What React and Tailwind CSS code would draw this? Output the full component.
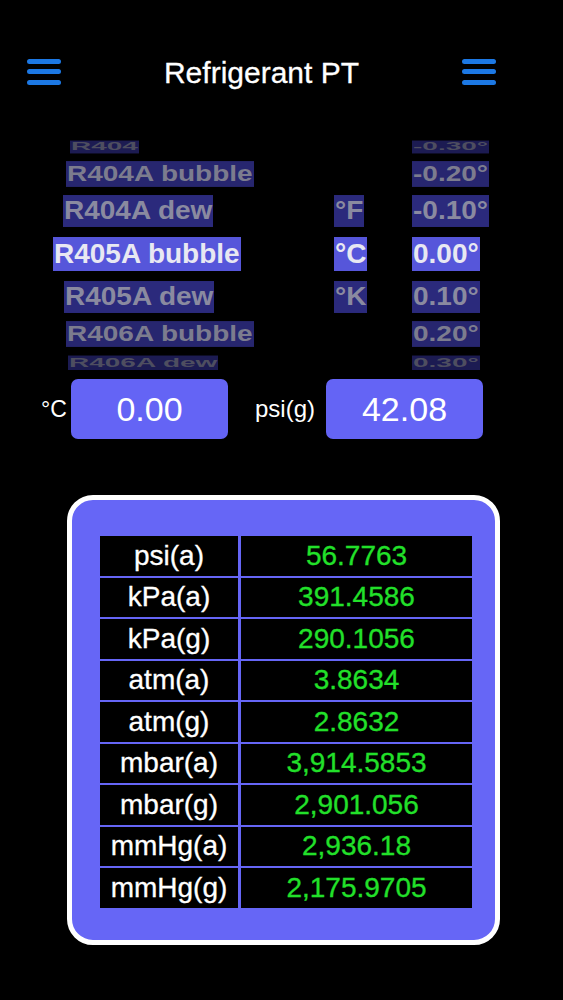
const PICKER_ROWS = [
  { label: "R404", unit: "", value: "-0.30°", h: 13, sy: "scale-y-[0.38]", lx: "pl-[70px]", tone: "far" },
  { label: "R404A bubble", unit: "", value: "-0.20°", h: 42, sy: "scale-y-[0.76]", lx: "pl-[66px]", tone: "mid" },
  { label: "R404A dew", unit: "°F", value: "-0.10°", h: 32, sy: "scale-y-[0.94]", lx: "pl-[63px]", tone: "near" },
  { label: "R405A bubble", unit: "°C", value: "0.00°", h: 54, sy: "scale-y-100", lx: "pl-[53px]", tone: "sel" },
  { label: "R405A dew", unit: "°K", value: "0.10°", h: 32, sy: "scale-y-[0.94]", lx: "pl-[64px]", tone: "near" },
  { label: "R406A bubble", unit: "", value: "0.20°", h: 42, sy: "scale-y-[0.76]", lx: "pl-[66px]", tone: "mid" },
  { label: "R406A dew", unit: "", value: "0.30°", h: 15, sy: "scale-y-[0.44]", lx: "pl-[68px]", tone: "far" },
];

const TONES = {
  sel: "bg-[#5656da] text-[#e8e8f2]",
  near: "bg-[#2b2a7c] text-[#8a8aa0]",
  mid: "bg-[#27266f] text-[#7c7c8e]",
  far: "bg-[#1c1b52] text-[#4e4e60]",
};

const RESULTS = [
  ["psi(a)", "56.7763"],
  ["kPa(a)", "391.4586"],
  ["kPa(g)", "290.1056"],
  ["atm(a)", "3.8634"],
  ["atm(g)", "2.8632"],
  ["mbar(a)", "3,914.5853"],
  ["mbar(g)", "2,901.056"],
  ["mmHg(a)", "2,936.18"],
  ["mmHg(g)", "2,175.9705"],
];

function MenuIcon() {
  return (
    <svg width="34" height="26" viewBox="0 0 34 26" fill="none">
      <g stroke="#1c78e4" strokeWidth="5" strokeLinecap="round">
        <line x1="2.5" y1="2.5" x2="31.5" y2="2.5" />
        <line x1="2.5" y1="12.5" x2="31.5" y2="12.5" />
        <line x1="2.5" y1="23.5" x2="31.5" y2="23.5" />
      </g>
    </svg>
  );
}

function Cell({ text, tone }) {
  if (!text) return null;
  return <span className={`inline-block h-[34px] leading-[34px] px-[1px] ${TONES[tone]}`}>{text}</span>;
}

export default function App() {
  return (
    <div className="min-h-[1000px] w-[563px] bg-black text-white font-['Liberation_Sans',Arial,sans-serif] overflow-hidden">
      <header className="mt-[59px] h-[26px] pl-[27px] pr-[67px] flex items-center justify-between">
        <MenuIcon />
        <h1 className="text-[30px] leading-none pt-[2px] [-webkit-text-stroke:0.3px_white]">Refrigerant PT</h1>
        <MenuIcon />
      </header>

      <div className="mt-[55px] h-[230px] overflow-hidden">
        {PICKER_ROWS.map((row) => (
          <div key={row.label} className="flex items-center" style={{ height: row.h }}>
            <div className={`flex items-center h-[34px] w-full text-[28px] font-bold ${row.sy}`}>
              <div className={`w-[334px] shrink-0 ${row.lx}`}>
                <Cell text={row.label} tone={row.tone} />
              </div>
              <div className="w-[78px] shrink-0">
                <Cell text={row.unit} tone={row.tone} />
              </div>
              <div>
                <Cell text={row.value} tone={row.tone} />
              </div>
            </div>
          </div>
        ))}
      </div>

      <div className="mt-[9px] h-[60px] flex items-center pl-[41px]">
        <span className="text-[23px] w-[30px]">°C</span>
        <div className="w-[157px] h-[60px] rounded-[7px] bg-[#6464f5] flex items-center justify-center text-[34px]">
          0.00
        </div>
        <span className="ml-[27px] text-[24px] w-[71px]">psi(g)</span>
        <div className="w-[157px] h-[60px] rounded-[7px] bg-[#6464f5] flex items-center justify-center text-[34px]">
          42.08
        </div>
      </div>

      <div className="mt-[56px] ml-[67px] w-[433px] h-[450px] rounded-[26px] border-[5px] border-white bg-[#6666f6] pl-[28px] pt-[36px]">
        <div className="grid grid-cols-[138px_231px] gap-x-[3px] gap-y-[2px] auto-rows-[39.5px] text-[28px] [-webkit-text-stroke:0.3px_currentColor]">
          {RESULTS.map(([unit, val]) => (
            <div key={unit} className="contents">
              <div className="bg-black flex items-center justify-center text-white">{unit}</div>
              <div className="bg-black flex items-center justify-center text-[#22e02a]">{val}</div>
            </div>
          ))}
        </div>
      </div>
    </div>
  );
}
